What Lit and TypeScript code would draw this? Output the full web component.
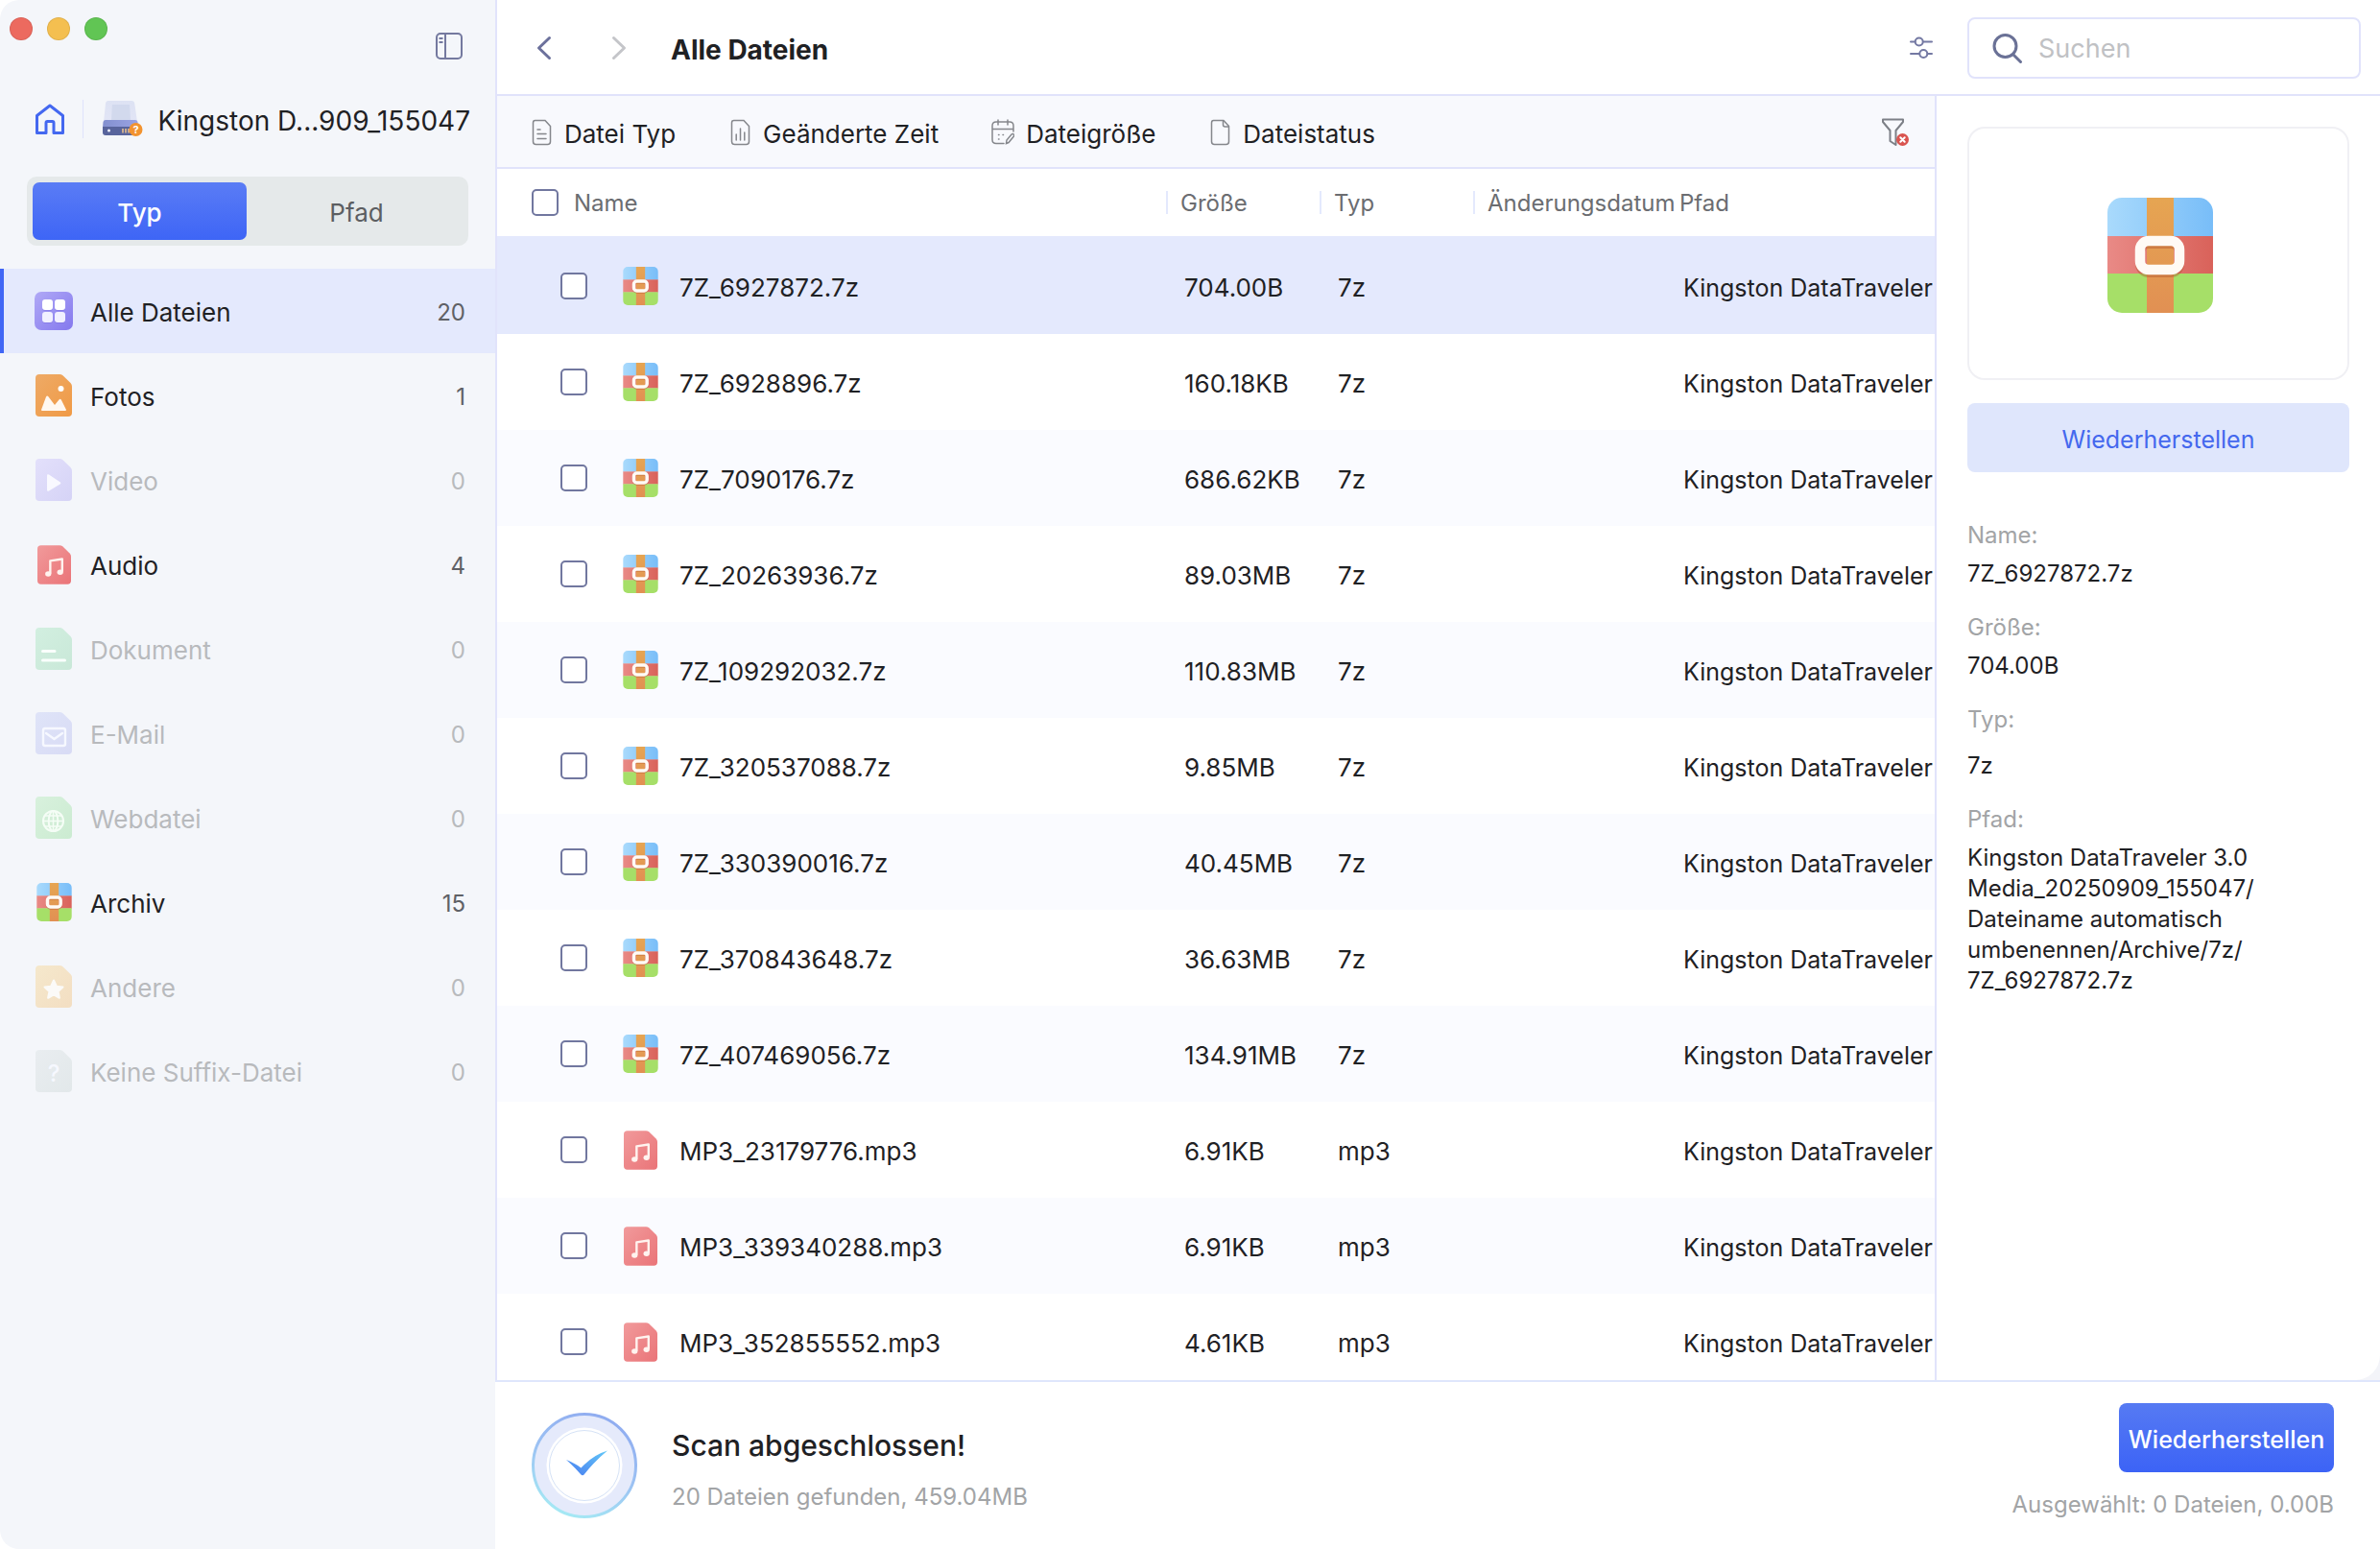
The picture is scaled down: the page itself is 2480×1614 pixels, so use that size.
import { LitElement, html, css, svg, nothing } from "lit";
import { customElement, property, state } from "lit/decorators.js";
import { classMap } from "lit/directives/class-map.js";

type IconKind =
  | "all" | "photo" | "video" | "audio" | "document"
  | "mail" | "web" | "archive" | "other" | "unknown";

interface Category { id: IconKind; label: string; count: number; }
interface FileRow { name: string; size: string; type: string; icon: IconKind; }

const DRIVE = "Kingston DataTraveler";
const VOLUME = `${DRIVE} 3.0 Media_20250909_155047`;

const CATEGORIES: Category[] = [
  { id: "all", label: "Alle Dateien", count: 20 },
  { id: "photo", label: "Fotos", count: 1 },
  { id: "video", label: "Video", count: 0 },
  { id: "audio", label: "Audio", count: 4 },
  { id: "document", label: "Dokument", count: 0 },
  { id: "mail", label: "E-Mail", count: 0 },
  { id: "web", label: "Webdatei", count: 0 },
  { id: "archive", label: "Archiv", count: 15 },
  { id: "other", label: "Andere", count: 0 },
  { id: "unknown", label: "Keine Suffix-Datei", count: 0 },
];

const archive = (id: string, size: string): FileRow => ({ name: `7Z_${id}.7z`, size, type: "7z", icon: "archive" });
const audio = (id: string, size: string): FileRow => ({ name: `MP3_${id}.mp3`, size, type: "mp3", icon: "audio" });

const FILES: FileRow[] = [
  archive("6927872", "704.00B"),
  archive("6928896", "160.18KB"),
  archive("7090176", "686.62KB"),
  archive("20263936", "89.03MB"),
  archive("109292032", "110.83MB"),
  archive("320537088", "9.85MB"),
  archive("330390016", "40.45MB"),
  archive("370843648", "36.63MB"),
  archive("407469056", "134.91MB"),
  audio("23179776", "6.91KB"),
  audio("339340288", "6.91KB"),
  audio("352855552", "4.61KB"),
];

/* Sheet colours per kind: top-left and bottom-right of the gradient. */
const SHEETS: Partial<Record<IconKind, [string, string]>> = {
  photo: ["#eeaa66", "#f09a45"],
  video: ["#e3e0fb", "#d5d3f6"],
  audio: ["#f19a9b", "#ea7478"],
  document: ["#d2efe0", "#c9e8d8"],
  mail: ["#dfe4f8", "#d8dbf5"],
  web: ["#d8f1dd", "#cbebd1"],
  other: ["#f5e8cc", "#f3dec2"],
  unknown: ["#e9edf0", "#e2e8ea"],
};

const GLYPHS: Partial<Record<IconKind, unknown>> = {
  photo: svg`
    <circle cx="26.5" cy="15" r="3" fill="#fff"/>
    <path d="M6 37 11 23.500q1-2 2.400-.2L20 32l4.500-5.500q1.200-1.400 2.400.2L32 37q0 1-1 1H7q-1 0-1-1z" fill="#fff8f0"/>`,
  video: svg`<path d="M12 17.500v15q0 2 2 1l11.500-7q1.600-1 0-2.200L14 16.500q-2-1-2 1z" fill="#f9f9ff"/>`,
  audio: svg`
    <g fill="none" stroke="#fff3ef" stroke-width="2.600" stroke-linejoin="round">
      <path d="M14.500 32V17.500L28 15.500V30"/>
    </g>
    <ellipse cx="12.200" cy="32.300" rx="3.400" ry="3" fill="#fff3ef"/>
    <ellipse cx="25.700" cy="30.300" rx="3.400" ry="3" fill="#fff3ef"/>`,
  document: svg`
    <g stroke="#fafffc" stroke-width="3" stroke-linecap="round">
      <path d="M7.500 24.500h12.500M7.500 34h23"/>
    </g>`,
  mail: svg`
    <rect x="8" y="17" width="23" height="18" rx="2" fill="none" stroke="#f6f8ff" stroke-width="2.400"/>
    <path d="m11 22 8.500 6 8.500-6" fill="none" stroke="#f6f8ff" stroke-width="2.400" stroke-linecap="round"/>`,
  web: svg`
    <g fill="none" stroke="#f5fdf6" stroke-width="2">
      <circle cx="18.500" cy="25.500" r="10.500"/>
      <ellipse cx="18.500" cy="25.500" rx="4.800" ry="10.500"/>
      <path d="M8 25.500h21M18.500 15v21M10 20h17M10 31h17" stroke-width="1.500"/>
    </g>`,
  other: svg`<path d="m19 15.500 2.900 6.200 6.600.8-4.900 4.600 1.300 6.700-5.900-3.300-5.900 3.300 1.300-6.700-4.900-4.600 6.600-.8z"
    fill="#fbfaf8" stroke="#fbfaf8" stroke-width="2" stroke-linejoin="round"/>`,
  unknown: svg`<text x="19" y="33" text-anchor="middle" font-family="Inter, sans-serif" font-size="24"
    font-weight="500" fill="#f6f8ff">?</text>`,
};

@customElement("file-icon")
export class FileIcon extends LitElement {
  static styles = css`
    :host { display: block; }
    .art { display: block; width: 100%; height: 100%; }
  `;

  @property() kind: IconKind = "archive";

  render() {
    if (this.kind === "archive") return this.renderArchive();
    if (this.kind === "all") return this.renderAll();
    const [from, to] = SHEETS[this.kind] ?? ["#fff", "#fff"];
    return html`
      <svg class="art" viewBox="0 0 38 44" aria-hidden="true">
        <defs>
          <linearGradient id="sheet" x1="0" y1="0" x2="1" y2="1">
            <stop offset="0" stop-color=${from}/><stop offset="1" stop-color=${to}/>
          </linearGradient>
        </defs>
        <path d="M4 0H25q2 0 3.500 1.200L36.500 9Q38 10.500 38 12.500V40q0 4-4 4H4q-4 0-4-4V4Q0 0 4 0z" fill="url(#sheet)"/>
        ${GLYPHS[this.kind] ?? nothing}
      </svg>`;
  }

  private renderAll() {
    return html`
      <svg class="art" viewBox="0 0 40 40" aria-hidden="true">
        <defs>
          <linearGradient id="tile" x1="0" y1="0" x2="1" y2="1">
            <stop offset="0" stop-color="#b0a9f6"/><stop offset="1" stop-color="#8478ee"/>
          </linearGradient>
        </defs>
        <rect width="40" height="40" rx="7" fill="url(#tile)"/>
        <g fill="#6f62d8" opacity=".35">
          <rect x="8" y="9" width="11" height="11" rx="3"/><rect x="21" y="9" width="11" height="11" rx="3"/>
          <rect x="8" y="22" width="11" height="11" rx="3"/><rect x="21" y="22" width="11" height="11" rx="3"/>
        </g>
        <g fill="#fff">
          <rect x="8" y="8" width="11" height="11" rx="3"/><rect x="21" y="8" width="11" height="11" rx="3"/>
          <rect x="8" y="21" width="11" height="11" rx="3" fill="#f1f0ff"/><rect x="21" y="21" width="11" height="11" rx="3" fill="#f1f0ff"/>
        </g>
      </svg>`;
  }

  private renderArchive() {
    return html`
      <svg class="art" viewBox="0 0 110 120" aria-hidden="true">
        <defs>
          <linearGradient id="blue"><stop offset="0" stop-color="#a9dafc"/><stop offset="1" stop-color="#78bdf8"/></linearGradient>
          <linearGradient id="red"><stop offset="0" stop-color="#e98a86"/><stop offset="1" stop-color="#d9625a"/></linearGradient>
          <linearGradient id="strap" x1="0" y1="0" x2="0" y2="1"><stop offset="0" stop-color="#e6a552"/><stop offset="1" stop-color="#e19053"/></linearGradient>
          <clipPath id="body"><rect width="110" height="120" rx="15"/></clipPath>
        </defs>
        <g clip-path="url(#body)">
          <rect width="110" height="41" fill="url(#blue)"/>
          <rect y="40" width="110" height="40" fill="url(#red)"/>
          <rect y="79" width="110" height="41" fill="#a6df68"/>
          <rect x="41" width="28" height="120" fill="url(#strap)"/>
        </g>
        <rect x="34" y="48" width="41" height="30" rx="9" fill="none" stroke="#b4562f" stroke-opacity=".45" stroke-width="10"/>
        <rect x="34" y="45" width="41" height="30" rx="9" fill="none" stroke="#fffaf5" stroke-width="10.500"/>
      </svg>`;
  }
}

const icons = {
  sidebar: html`
    <svg class="ico" width="30" height="30" viewBox="0 0 30 30" fill="none" stroke="#74799f" stroke-width="2" aria-hidden="true">
      <rect x="2" y="2" width="26" height="26" rx="4"/>
      <path d="M11 2v26M4.500 7h4M4.500 11h4"/>
    </svg>`,
  home: html`
    <svg class="ico" width="32" height="34" viewBox="0 0 32 34" fill="none" stroke="#4468f0" stroke-width="3" stroke-linejoin="round" aria-hidden="true">
      <path d="M2.500 13.500 16 3l13.500 10.500v18H20V21q0-1.500-1.500-1.500h-5Q12 19.500 12 21v10.500H2.500z"/>
    </svg>`,
  drive: html`
    <svg class="ico" width="42" height="38" viewBox="0 0 42 38" aria-hidden="true">
      <defs>
        <linearGradient id="lid" x1="0" y1="0" x2="0" y2="1"><stop offset="0" stop-color="#dde2f3"/><stop offset="1" stop-color="#e2e5f6"/></linearGradient>
        <linearGradient id="case" x1="0" y1="0" x2="1" y2="0"><stop offset="0" stop-color="#8390cf"/><stop offset="1" stop-color="#9aa3e4"/></linearGradient>
      </defs>
      <path d="M6 0H30q3 0 3.300 3L36 22H1L3 3q.3-3 3-3z" fill="url(#lid)"/>
      <path d="M10 4h18l1 16H9z" fill="#ccd4ea" opacity=".7"/>
      <path d="M3 20h31q2 0 2.500 2l.5 6H0l.5-6q.5-2 2.500-2z" fill="url(#case)"/>
      <path d="M0 27H37v6q0 3-3 3H3q-3 0-3-3z" fill="#58649c"/>
      <circle cx="6.500" cy="31" r="1.500" fill="#eef1fb"/>
      <path d="M21 29v4.500M24 29v4.500M27 29v4.500" stroke="#f0c48e" stroke-width="1.500"/>
      <circle cx="34.500" cy="30" r="7" fill="#f2932f"/>
      <text x="34.500" y="34" text-anchor="middle" font-family="Inter, sans-serif" font-size="11" font-weight="700" fill="#fff">?</text>
    </svg>`,
  back: html`
    <svg class="ico" width="16" height="26" viewBox="0 0 16 26" fill="none" stroke="#6c719c" stroke-width="3" stroke-linecap="round" stroke-linejoin="round" aria-hidden="true"><path d="M13.500 2.500 2.500 13l11 10.500"/></svg>`,
  forward: html`
    <svg class="ico" width="16" height="26" viewBox="0 0 16 26" fill="none" stroke="#c4c5c9" stroke-width="3" stroke-linecap="round" stroke-linejoin="round" aria-hidden="true"><path d="m2.500 2.500 11 10.500-11 10.500"/></svg>`,
  sliders: html`
    <svg class="ico" width="24" height="24" viewBox="0 0 24 24" fill="none" stroke="#7479a3" stroke-width="2" stroke-linecap="round" aria-hidden="true">
      <path d="M1 5.500h4.500M14 5.500h9M1 18h9M18.500 18H23"/>
      <circle cx="9.700" cy="5.500" r="4"/><circle cx="14.300" cy="18" r="4"/>
    </svg>`,
  search: html`
    <svg class="ico" width="32" height="32" viewBox="0 0 32 32" fill="none" stroke="#6a7196" stroke-width="3" stroke-linecap="round" aria-hidden="true">
      <circle cx="13.500" cy="14" r="11.500"/><path d="m22 23 7.500 7.500"/>
    </svg>`,
  type: html`
    <svg class="ico" width="24" height="28" viewBox="0 0 24 28" fill="none" stroke="#85878c" stroke-width="1.500" stroke-linecap="round" aria-hidden="true">
      <path d="M5.500 1.500H16L21.500 7.500V23.500q0 3-3 3h-12q-3 0-3-3V4Q3.500 1.500 5.500 1.500z"/>
      <path d="M8 11h3M8 15.500h9M8 20.500h9"/>
    </svg>`,
  chart: html`
    <svg class="ico" width="24" height="28" viewBox="0 0 24 28" fill="none" stroke="#85878c" stroke-width="1.500" stroke-linecap="round" aria-hidden="true">
      <path d="M5.500 1.500H16L21.500 7.500V23.500q0 3-3 3h-12q-3 0-3-3V4Q3.500 1.500 5.500 1.500z"/>
      <path d="M8.200 16v6M12.500 10v12M16.800 14v8"/>
    </svg>`,
  calendar: html`
    <svg class="ico" width="24" height="28" viewBox="0 0 24 28" fill="none" stroke="#85878c" stroke-width="1.500" stroke-linecap="round" aria-hidden="true">
      <path d="M13 25.500H5q-4 0-4-4V7q0-4 4-4H19q4 0 4 4v6M1 10.500h22M7 1v5M17 1v5"/>
      <path d="M7.500 16.500h.5M12 16.500h.5M7.500 21h.5M15.500 25.500l.5-3.500 5-6q1.500-1 2.300.2.800 1.200-.3 2.300l-5 6z"/>
    </svg>`,
  page: html`
    <svg class="ico" width="24" height="28" viewBox="0 0 24 28" fill="none" stroke="#85878c" stroke-width="1.500" stroke-linejoin="round" aria-hidden="true">
      <path d="M5.500 1.500H16L21.500 7.500V23.500q0 3-3 3h-12q-3 0-3-3V4Q3.500 1.500 5.500 1.500z"/>
      <path d="M15.500 1.500V6q0 2 2 2h4"/>
    </svg>`,
  funnel: html`
    <svg class="ico" width="30" height="30" viewBox="0 0 30 30" aria-hidden="true">
      <path d="M2 1.500H23v2.500L15.500 13v15L9.500 24V13L2 4z" fill="none" stroke="#7d8087" stroke-width="2" stroke-linejoin="round"/>
      <circle cx="22.500" cy="22.500" r="6.500" fill="#d9544f"/>
      <path d="m20.300 20.300 4.400 4.400m0-4.400-4.400 4.400" stroke="#fff" stroke-width="2" stroke-linecap="round"/>
    </svg>`,
  done: html`
    <svg class="done" width="110" height="110" viewBox="0 0 110 110" aria-hidden="true">
      <defs>
        <linearGradient id="rim" x1=".7" y1="0" x2=".3" y2="1">
          <stop offset="0" stop-color="#8fabf0"/><stop offset=".5" stop-color="#9cc2f3"/><stop offset="1" stop-color="#a5eaf4"/>
        </linearGradient>
        <linearGradient id="tick" x1="1" y1="0" x2="0" y2="1">
          <stop offset="0" stop-color="#62c8f8"/><stop offset="1" stop-color="#4a7df0"/>
        </linearGradient>
      </defs>
      <circle cx="55" cy="55" r="53.500" fill="#e5eafb" stroke="url(#rim)" stroke-width="3"/>
      <circle cx="55" cy="55" r="39.500" fill="#fff"/>
      <circle cx="55" cy="55" r="36.500" fill="none" stroke="#d5e2f6" stroke-width="1"/>
      <path d="M36 49q9 3.500 15.500 8.500Q64 44 79 39.500 66 50 55 64q-2 2.500-4 0Q44 56 36 49z" fill="url(#tick)"/>
    </svg>`,
};

const FILTERS = [
  { label: "Datei Typ", icon: icons.type },
  { label: "Geänderte Zeit", icon: icons.chart },
  { label: "Dateigröße", icon: icons.calendar },
  { label: "Dateistatus", icon: icons.page },
];

@customElement("app-root")
export class AppRoot extends LitElement {
  static styles = css`
    :host {
      display: block;
      height: 100vh;
      background: #fff;
      color: #1f2124;
      font: 400 26px/32px Inter, "Liberation Sans", sans-serif;
      --line: #e1e3fb;
      --accent: #4066f5;
      --muted: #a2a4a6;
    }
    *, *::before, *::after { box-sizing: border-box; }
    button { font: inherit; color: inherit; border: 0; padding: 0; background: none; cursor: pointer; }
    .ico { display: block; flex: none; }
    /* Labels sit slightly below the middle of their icon. */
    .text { display: block; padding-top: 4px; }

    .window { display: grid; grid-template-columns: 516px minmax(0, 1fr); height: 100%; }

    .sidebar {
      display: flex; flex-direction: column; min-height: 0; overflow: hidden;
      background: #f4f6fa; border-radius: 20px 0 0 20px;
    }
    .titlebar { display: flex; justify-content: space-between; padding: 18px 33px 0 10px; }
    .lights { display: flex; gap: 15px; }
    .light { width: 24px; height: 24px; border-radius: 50%; border: 1px solid rgb(0 0 0 / 8%); }
    .light.red { background: #ec6a5f; }
    .light.amber { background: #f4bf50; }
    .light.green { background: #61c554; }
    .toggle { margin-top: 15px; }
    .device { display: flex; align-items: center; height: 40px; margin-top: 41px; padding: 0 26px 0 36px; }
    .device-rule { width: 2px; height: 40px; margin: 0 20px 0 18px; background: #dfe2fb; }
    .device-name { margin: 0 0 0 16px; padding-top: 4px; font-size: 28px; font-weight: 400; white-space: nowrap; }
    .segment {
      display: grid; grid-template-columns: 223px 1fr; gap: 4px; margin: 40px 28px 24px; padding: 6px;
      background: #e5e9ea; border-radius: 10px; color: #5c5e62;
    }
    .segment-tab { height: 60px; padding-top: 4px; border-radius: 7px; }
    .segment-tab.active { color: #fff; font-weight: 500; background: linear-gradient(#5a7cf5, #3e65f6); }
    .categories { display: flex; flex-direction: column; margin: 0; padding: 0; list-style: none; }
    .category {
      display: flex; align-items: center; width: 100%; height: 88px; padding: 0 31px 0 32px;
      border-left: 4px solid transparent; text-align: left;
    }
    .category.active { background: #e4e9fd; border-left-color: var(--accent); }
    .category.empty { color: #b8babd; }
    .category-icon { display: flex; justify-content: center; width: 40px; margin-right: 18px; }
    .category-label { flex: 1; }
    .category-count { font-size: 24px; color: #5f6166; }
    .category.empty .category-count { color: #b8babd; }
    .icon-all { width: 40px; height: 40px; }
    .icon-sheet { width: 38px; height: 44px; }
    .icon-audio { width: 35px; height: 41px; }
    .icon-archive { width: 37px; height: 40px; }

    .workspace { display: flex; flex-direction: column; min-width: 0; min-height: 0; }
    .upper { flex: 1; display: flex; flex-direction: column; min-height: 0; border-left: 2px solid var(--line); }
    .toolbar {
      display: flex; align-items: center; height: 100px; padding: 2px 20px 0 29px;
      border-bottom: 2px solid var(--line);
    }
    .nav-button { display: flex; align-items: center; justify-content: center; width: 40px; height: 40px; margin-right: 38px; }
    .nav-button.last { margin-right: 34px; }
    .title { flex: 1; margin: 0; padding-top: 4px; font-size: 28px; font-weight: 700; }
    .search {
      display: flex; align-items: center; gap: 16px; width: 410px; height: 64px; margin-left: 36px; padding: 0 24px;
      border: 2px solid var(--line); border-radius: 8px;
    }
    .search-input { flex: 1; min-width: 0; border: 0; outline: 0; padding: 2px 0 0; background: none; font: inherit; font-size: 27px; color: inherit; }
    .search-input::placeholder { color: #c0c1c4; opacity: 1; }

    .content { flex: 1; display: flex; min-height: 0; background: #f3f4f9; }
    .files { flex: 1; display: flex; flex-direction: column; min-width: 0; overflow: hidden; background: #fff; }
    .filters {
      display: flex; align-items: center; gap: 55px; height: 76px; flex: none; padding: 2px 26px 0 34px;
      background: #f8f9fd; border-bottom: 2px solid var(--line);
    }
    .filter { display: flex; align-items: center; gap: 12px; }
    .filter-clear { margin-left: auto; }
    .table-clip { flex: 1; min-height: 0; overflow: hidden; }
    .table { width: 100%; table-layout: fixed; border-collapse: separate; border-spacing: 0; }
    .table th { height: 72px; padding: 0; border-bottom: 2px solid #e4e9fd; font-size: 24px; font-weight: 400; color: #6b6d71; text-align: left; white-space: nowrap; }
    .table td { height: 100px; padding: 0; white-space: nowrap; overflow: hidden; }
    .col-fixed { width: 160px; }
    .col-date { width: 200px; }
    .col-path { width: 281px; }
    .th-name { display: flex; align-items: center; gap: 16px; padding-left: 36px; }
    .th-name .text { padding-top: 2px; }
    .th-text { display: block; height: 24px; padding-left: 13px; border-left: 2px solid #e4e9fd; line-height: 26px; }
    .th-text.bare { border-left-color: transparent; }
    .td-name { display: flex; align-items: center; padding-left: 66px; }
    .td-icon { display: flex; justify-content: center; width: 38px; margin: 0 22px 0 36px; }
    .td-text { display: block; padding: 4px 0 0 19px; }
    .td-path { font-size: 25px; }
    .row:nth-child(odd) { background: #fafbff; }
    .row.selected { background: #e4e9fd; }
    .check {
      appearance: none; flex: none; width: 28px; height: 28px; margin: 0;
      border: 2px solid #71779f; border-radius: 5px; background: #fff;
    }
    .check:checked { background: var(--accent); border-color: var(--accent); }

    .details {
      width: 464px; padding: 32px 32px 0; border-left: 2px solid var(--line); overflow: hidden;
      background: #fff; border-bottom-right-radius: 26px;
    }
    .preview {
      display: flex; align-items: center; justify-content: center; height: 264px; padding: 4px 0 0 4px;
      border: 2px solid #f0f0f4; border-radius: 18px;
    }
    .preview-icon { width: 110px; height: 120px; }
    .restore-light {
      width: 100%; height: 72px; margin: 24px 0 50px; padding-top: 4px; border-radius: 8px;
      background: #dfe6fc; color: #4468ee; font-size: 25px;
    }
    .facts { display: flex; flex-direction: column; gap: 24px; margin: 0; font-size: 24px; }
    .fact { display: flex; flex-direction: column; gap: 8px; }
    .fact.roomy { gap: 16px; }
    .fact-label { color: var(--muted); }
    .fact-value { margin: 0; }

    .footer {
      display: flex; align-items: center; justify-content: space-between; flex: none; height: 176px; padding: 0 48px 0 38px;
      border-top: 2px solid #dfe6fc;
    }
    .scan { display: flex; align-items: center; gap: 36px; }
    .scan-text { padding-top: 9px; }
    .done { display: block; }
    .scan-title { margin: 0 0 20px; font-size: 30px; line-height: 36px; font-weight: 500; }
    .note { margin: 0; font-size: 24px; color: var(--muted); }
    .actions { display: flex; flex-direction: column; align-items: flex-end; gap: 18px; padding-bottom: 8px; }
    .restore {
      width: 224px; height: 72px; padding-top: 4px; border-radius: 8px; color: #fff;
      font-size: 25px; font-weight: 500; background: linear-gradient(#567af3, #3c63f6);
    }
  `;

  @state() private category: IconKind = "all";
  @state() private view: "type" | "path" = "type";
  @state() private selected = 0;

  private iconClass(kind: IconKind) {
    if (kind === "all" || kind === "audio" || kind === "archive") return `icon-${kind}`;
    return "icon-sheet";
  }

  render() {
    return html`
      <div class="window">
        ${this.renderSidebar()}
        <div class="workspace">
          <main class="upper">
            ${this.renderToolbar()}
            <div class="content">
              <section class="files" aria-label="Dateien">
                ${this.renderFilters()}
                <div class="table-clip">${this.renderTable()}</div>
              </section>
              ${this.renderDetails()}
            </div>
          </main>
          ${this.renderFooter()}
        </div>
      </div>`;
  }

  private renderSidebar() {
    return html`
      <aside class="sidebar">
        <div class="titlebar">
          <div class="lights">
            <button class="light red" aria-label="Schließen"></button>
            <button class="light amber" aria-label="Minimieren"></button>
            <button class="light green" aria-label="Maximieren"></button>
          </div>
          <button class="toggle" aria-label="Seitenleiste">${icons.sidebar}</button>
        </div>
        <div class="device">
          <button aria-label="Startseite">${icons.home}</button>
          <span class="device-rule"></span>
          ${icons.drive}
          <h2 class="device-name">Kingston D...909_155047</h2>
        </div>
        <div class="segment">
          <button class=${classMap({ "segment-tab": true, active: this.view === "type" })} @click=${() => (this.view = "type")}>Typ</button>
          <button class=${classMap({ "segment-tab": true, active: this.view === "path" })} @click=${() => (this.view = "path")}>Pfad</button>
        </div>
        <nav>
          <ul class="categories">
            ${CATEGORIES.map((c) => html`
              <li>
                <button
                  class=${classMap({ category: true, active: c.id === this.category, empty: c.count === 0 })}
                  @click=${() => (this.category = c.id)}
                >
                  <span class="category-icon"><file-icon class=${this.iconClass(c.id)} kind=${c.id}></file-icon></span>
                  <span class="text category-label">${c.label}</span>
                  <span class="text category-count">${c.count}</span>
                </button>
              </li>`)}
          </ul>
        </nav>
      </aside>`;
  }

  private renderToolbar() {
    return html`
      <header class="toolbar">
        <button class="nav-button" aria-label="Zurück">${icons.back}</button>
        <button class="nav-button last" aria-label="Vorwärts">${icons.forward}</button>
        <h1 class="title">Alle Dateien</h1>
        <button aria-label="Ansicht anpassen">${icons.sliders}</button>
        <div class="search">
          <label for="search" aria-label="Suchen">${icons.search}</label>
          <input class="search-input" id="search" type="text" placeholder="Suchen" />
        </div>
      </header>`;
  }

  private renderFilters() {
    return html`
      <div class="filters">
        ${FILTERS.map((f) => html`<button class="filter">${f.icon}<span class="text">${f.label}</span></button>`)}
        <button class="filter-clear" aria-label="Filter löschen">${icons.funnel}</button>
      </div>`;
  }

  private renderTable() {
    return html`
      <table class="table">
        <colgroup>
          <col /><col class="col-fixed" /><col class="col-fixed" /><col class="col-date" /><col class="col-path" />
        </colgroup>
        <thead>
          <tr>
            <th><span class="th-name"><input class="check" id="check-all" type="checkbox" /><label class="text" for="check-all">Name</label></span></th>
            <th><span class="th-text">Größe</span></th>
            <th><span class="th-text">Typ</span></th>
            <th><span class="th-text">Änderungsdatum</span></th>
            <th><span class="th-text bare">Pfad</span></th>
          </tr>
        </thead>
        <tbody>
          ${FILES.map((f, i) => html`
            <tr class=${classMap({ row: true, selected: i === this.selected })} @click=${() => (this.selected = i)}>
              <td>
                <div class="td-name">
                  <input class="check" id="file-${i}" type="checkbox" />
                  <span class="td-icon"><file-icon class=${this.iconClass(f.icon)} kind=${f.icon}></file-icon></span>
                  <label class="text" for="file-${i}">${f.name}</label>
                </div>
              </td>
              <td><span class="td-text">${f.size}</span></td>
              <td><span class="td-text">${f.type}</span></td>
              <td></td>
              <td><span class="td-text td-path">${DRIVE}</span></td>
            </tr>`)}
        </tbody>
      </table>`;
  }

  private renderDetails() {
    const file = FILES[this.selected];
    return html`
      <aside class="details" aria-label="Details">
        <div class="preview"><file-icon class="preview-icon" kind=${file.icon}></file-icon></div>
        <button class="restore-light">Wiederherstellen</button>
        <dl class="facts">
          <div class="fact"><dt class="fact-label">Name:</dt><dd class="fact-value">${file.name}</dd></div>
          <div class="fact"><dt class="fact-label">Größe:</dt><dd class="fact-value">${file.size}</dd></div>
          <div class="fact roomy"><dt class="fact-label">Typ:</dt><dd class="fact-value">${file.type}</dd></div>
          <div class="fact">
            <dt class="fact-label">Pfad:</dt>
            <dd class="fact-value">${VOLUME}/<wbr />Dateiname automatisch umbenennen/Archive/7z/<wbr />${file.name}</dd>
          </div>
        </dl>
      </aside>`;
  }

  private renderFooter() {
    return html`
      <footer class="footer">
        <div class="scan">
          ${icons.done}
          <div class="scan-text">
            <h2 class="scan-title">Scan abgeschlossen!</h2>
            <p class="note">20 Dateien gefunden, 459.04MB</p>
          </div>
        </div>
        <div class="actions">
          <button class="restore">Wiederherstellen</button>
          <p class="note">Ausgewählt: 0 Dateien, 0.00B</p>
        </div>
      </footer>`;
  }
}
